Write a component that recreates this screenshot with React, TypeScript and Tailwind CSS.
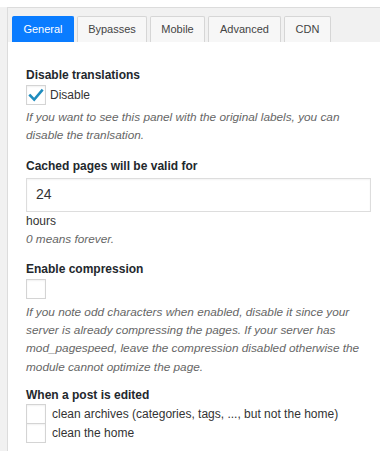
import React from "react";

const tabs = [
  { label: "General", w: "w-[62px]" },
  { label: "Bypasses", w: "w-[70px]" },
  { label: "Mobile", w: "w-[55px]" },
  { label: "Advanced", w: "w-[73px]" },
  { label: "CDN", w: "w-[47px]" },
];

function Check() {
  return (
    <svg viewBox="0 0 20 20" className="size-[19px]" fill="none">
      <path
        d="M3.5 10 L8 14.5 L16.5 4.5"
        stroke="#1e8cbe"
        strokeWidth={2.8}
        strokeLinecap="square"
      />
    </svg>
  );
}

function Box({ checked = false }: { checked?: boolean }) {
  return (
    <div className="flex size-[20px] shrink-0 items-center justify-center border border-[#d4d4d4] bg-white shadow-[inset_0_1px_2px_rgba(0,0,0,0.06)]">
      {checked && <Check />}
    </div>
  );
}

function Label({ children }: { children: React.ReactNode }) {
  return (
    <div className="text-[12px] font-bold leading-[18px] text-[#23282d]">
      {children}
    </div>
  );
}

function Desc({ children }: { children: React.ReactNode }) {
  return (
    <p className="text-[11.8px] italic leading-[18.3px] text-[#666]">
      {children}
    </p>
  );
}

export default function App() {
  return (
    <div className="h-[451px] w-[380px] overflow-hidden bg-white pt-[7px] font-['Liberation_Sans',Arial,sans-serif]">
      <div className="flex h-full">
        <div className="w-[7px] shrink-0 bg-[#f1f1f1]" />
        <div className="flex-1 border-l border-t border-[#dcdcdc] bg-white">
          {/* Tab bar */}
          <div className="flex gap-[3px] bg-[#f1f1f1] pl-[4px] pt-[8px]">
            {tabs.map((t, i) => (
              <div
                key={t.label}
                className={`${t.w} flex h-[26px] items-center justify-center rounded-t-[2px] border border-b-0 text-[11px] ${
                  i === 0
                    ? "border-[#0a7cff] bg-[#0a7cff] text-white"
                    : "border-[#d6d6d6] bg-[#f7f7f7] text-[#444]"
                }`}
              >
                {t.label}
              </div>
            ))}
          </div>

          {/* Content */}
          <div className="pl-[18px] pr-[9px] pt-[24px]">
            <section>
              <Label>Disable translations</Label>
              <div className="mt-[1px] flex items-center gap-[4px]">
                <Box checked />
                <span className="text-[12px] text-[#333]">Disable</span>
              </div>
              <div className="mt-[3px]">
                <Desc>
                  If you want to see this panel with the original labels, you can
                  disable the tranlsation.
                </Desc>
              </div>
            </section>

            <section className="mt-[12px]">
              <Label>Cached pages will be valid for</Label>
              <div className="mt-[3px] flex h-[34px] items-center border border-[#dddddd] bg-white pl-[9px] text-[14px] text-[#333] shadow-[inset_0_1px_2px_rgba(0,0,0,0.05)]">
                24
              </div>
              <div className="text-[12px] leading-[18px] text-[#333]">hours</div>
              <Desc>0 means forever.</Desc>
            </section>

            <section className="mt-[12px]">
              <Label>Enable compression</Label>
              <div className="mt-[1px]">
                <Box />
              </div>
              <div className="mt-[4px]">
                <Desc>
                  If you note odd characters when enabled, disable it since your
                  server is already compressing the pages. If your server has
                  mod_pagespeed, leave the compression disabled otherwise the
                  module cannot optimize the page.
                </Desc>
              </div>
            </section>

            <section className="mt-[10px]">
              <Label>When a post is edited</Label>
              <div className="flex flex-col">
                <div className="flex h-[19px] items-center gap-[6px]">
                  <Box />
                  <span className="text-[12px] text-[#333]">
                    clean archives (categories, tags, ..., but not the home)
                  </span>
                </div>
                <div className="flex h-[20px] items-center gap-[6px]">
                  <Box />
                  <span className="text-[12px] text-[#333]">clean the home</span>
                </div>
              </div>
            </section>
          </div>
        </div>
      </div>
    </div>
  );
}
